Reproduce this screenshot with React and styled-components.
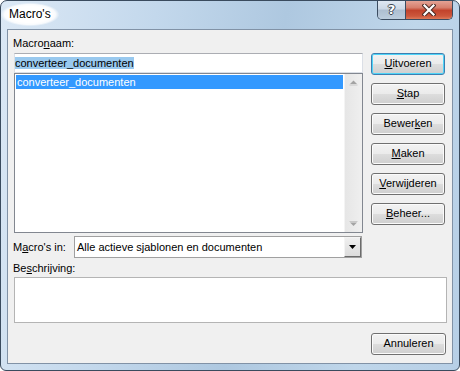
import React from "react";
import styled, { createGlobalStyle } from "styled-components";

const Global = createGlobalStyle`
  html, body { margin: 0; padding: 0; background: #ffffff; }
  body { font-family: "Liberation Sans", Arial, sans-serif; }
`;

const Window = styled.div`
  width: 460px;
  height: 371px;
  box-sizing: border-box;
  border: 1px solid #3a4b5e;
  border-radius: 7px 7px 6px 6px;
  background: linear-gradient(100deg, #dbe8f5 0%, #c3d8ec 30%, #aec8e0 55%, #bfd6ea 80%, #b7cfe6 100%);
  padding: 0 6px 6px;
  display: flex;
  flex-direction: column;
  overflow: hidden;
  font-family: "Liberation Sans", Arial, sans-serif;
  font-size: 11px;
  color: #000;
`;

const TitleBar = styled.div`
  height: 28px;
  display: flex;
  align-items: flex-start;
  flex: none;
`;

const Title = styled.div`
  margin: 2px 0 0 -6px;
  padding: 4px 8px 4px 8px;
  font-size: 12px;
  line-height: 15px;
  color: #000;
  background: radial-gradient(ellipse at center, rgba(255,255,255,1) 50%, rgba(255,255,255,0.85) 62%, rgba(255,255,255,0) 72%);
`;

const Caption = styled.div`
  margin-left: auto;
  margin-top: -1px;
  display: flex;
  height: 20px;
  box-sizing: border-box;
  border: 1px solid #3b4c60;
  border-top: none;
  border-radius: 0 0 5px 5px;
  overflow: hidden;
`;

const HelpBtn = styled.div`
  width: 27px;
  display: flex;
  align-items: center;
  justify-content: center;
  background: linear-gradient(#e2eaf3 0%, #cdd9e6 45%, #aebfd1 55%, #bccddd 100%);
  color: #fff;
  font-family: "DejaVu Sans", sans-serif;
  font-weight: bold;
  font-size: 13px;
  line-height: 13px;
  text-shadow: 1px 0 0 #3d4550, -1px 0 0 #3d4550, 0 1px 0 #3d4550, 0 -1px 0 #3d4550;
`;

const CloseBtn = styled.div`
  width: 46px;
  border-left: 1px solid #3b4c60;
  display: flex;
  align-items: center;
  justify-content: center;
  background: linear-gradient(#e6a89b 0%, #d67f6d 40%, #c2432c 55%, #cd573c 85%, #de7a5a 100%);
`;

const Client = styled.div`
  flex: 1;
  box-sizing: border-box;
  border: 1px solid #8192a6;
  background: #f0f0f0;
  padding: 0 5px 8px 6px;
  display: flex;
  flex-direction: column;
`;

const Top = styled.div`
  display: flex;
  gap: 8px;
  align-items: flex-start;
`;

const LeftCol = styled.div`
  width: 349px;
  display: flex;
  flex-direction: column;
`;

const Label = styled.div`
  margin-left: -1px;
  line-height: 13px;
  padding-top: ${(p) => p.$pt || 0}px;
  margin-top: ${(p) => p.$mt || 0}px;
  margin-bottom: ${(p) => p.$mb || 0}px;
  width: ${(p) => (p.$w ? p.$w + "px" : "auto")};
  flex: none;
  white-space: nowrap;
`;

const Key = styled.u`
  text-decoration: underline;
  text-underline-offset: 1px;
`;

const TextBox = styled.div`
  height: 20px;
  box-sizing: border-box;
  border: 1px solid #dbdfe6;
  border-top-color: #abadb3;
  background: #fff;
`;

const Selected = styled.span`
  display: inline-block;
  margin-top: 3px;
  line-height: 12px;
  height: 12px;
  background: #99c9ef;
  color: #000;
`;

const ListBox = styled.div`
  height: 160px;
  box-sizing: border-box;
  border: 1px solid #828790;
  background: #fff;
  display: flex;
`;

const Items = styled.div`
  flex: 1;
  padding: 1px;
`;

const Item = styled.div`
  height: 14px;
  line-height: 14px;
  padding-left: 1px;
  background: ${(p) => (p.$selected ? "#3399ff" : "transparent")};
  color: ${(p) => (p.$selected ? "#fff" : "#000")};
`;

const ScrollBar = styled.div`
  width: 17px;
  background: linear-gradient(to right, #e6e6e6, #efefef);
  border-left: 1px solid #f4f4f4;
  display: flex;
  flex-direction: column;
  justify-content: space-between;
`;

const ArrowBox = styled.div`
  height: 17px;
  display: flex;
  align-items: center;
  justify-content: center;
`;

const ButtonCol = styled.div`
  padding-top: 23px;
  display: flex;
  flex-direction: column;
  gap: 8px;
`;

const Button = styled.div`
  width: ${(p) => p.$w || 74}px;
  height: 22px;
  box-sizing: border-box;
  border: 1px solid ${(p) => (p.$default ? "#3c7fb1" : "#707070")};
  border-radius: 3px;
  background: linear-gradient(#f2f2f2 0%, #ebebeb 49%, #dddddd 51%, #cfcfcf 100%);
  box-shadow: inset 0 0 0 1px ${(p) => (p.$default ? "#4fd4f8" : "#fbfbfb")};
  display: flex;
  align-items: center;
  justify-content: center;
  line-height: 13px;
  padding-bottom: 1px;
  margin-right: ${(p) => p.$mr || 0}px;
`;

const Row = styled.div`
  margin-top: 3px;
  display: flex;
  align-items: center;
`;

const Select = styled.div`
  width: 288px;
  height: 22px;
  box-sizing: border-box;
  border: 1px solid #a0a0a0;
  background: #fff;
  display: flex;
  align-items: center;
`;

const SelectText = styled.div`
  flex: 1;
  padding-left: 2px;
  line-height: 13px;
`;

const DropBtn = styled.div`
  width: 17px;
  align-self: stretch;
  box-sizing: border-box;
  border: 1px solid;
  border-color: #f4f4f4 #6b6b6b #6b6b6b #f4f4f4;
  background: linear-gradient(#efefef, #dcdcdc);
  display: flex;
  align-items: center;
  justify-content: center;
`;

const DescBox = styled.div`
  height: 46px;
  box-sizing: border-box;
  border: 1px solid #b4b4b4;
  background: #fff;
`;

const Footer = styled.div`
  margin-top: 10px;
  display: flex;
  justify-content: flex-end;
`;

function Arrow({ up }) {
  return (
    <svg width="9" height="6" viewBox="0 0 9 6">
      {up ? (
        <>
          <path d="M4.5 0.5 L8 4 L1 4 Z" fill="#a3a3a3" />
          <rect x="0.5" y="4.5" width="8" height="1" fill="#c8c8c8" />
        </>
      ) : (
        <>
          <rect x="0.5" y="0" width="8" height="1" fill="#c8c8c8" />
          <path d="M1 1.5 L8 1.5 L4.5 5 Z" fill="#a3a3a3" />
        </>
      )}
    </svg>
  );
}

export default function App() {
  return (
    <>
      <Global />
      <Window>
        <TitleBar>
          <Title>Macro's</Title>
          <Caption>
            <HelpBtn>?</HelpBtn>
            <CloseBtn>
              <svg width="14" height="12" viewBox="0 0 14 12">
                <path d="M2.5 1.5 L11.5 10.5 M11.5 1.5 L2.5 10.5" stroke="#4a2a24" strokeWidth="4.2" strokeLinecap="square" fill="none" />
                <path d="M2.5 1.5 L11.5 10.5 M11.5 1.5 L2.5 10.5" stroke="#ffffff" strokeWidth="2.2" strokeLinecap="square" fill="none" />
              </svg>
            </CloseBtn>
          </Caption>
        </TitleBar>
        <Client>
          <Top>
            <LeftCol>
              <Label $pt={7} $mb={3}>
                Macro<Key>n</Key>aam:
              </Label>
              <TextBox>
                <Selected>converteer_documenten</Selected>
              </TextBox>
              <ListBox>
                <Items>
                  <Item $selected>converteer_documenten</Item>
                </Items>
                <ScrollBar>
                  <ArrowBox>
                    <Arrow up />
                  </ArrowBox>
                  <ArrowBox>
                    <Arrow />
                  </ArrowBox>
                </ScrollBar>
              </ListBox>
            </LeftCol>
            <ButtonCol>
              <Button $default>
                <span><Key>U</Key>itvoeren</span>
              </Button>
              <Button>
                <span><Key>S</Key>tap</span>
              </Button>
              <Button>
                <span>Bewer<Key>k</Key>en</span>
              </Button>
              <Button>
                <span><Key>M</Key>aken</span>
              </Button>
              <Button>
                <span><Key>V</Key>erwijderen</span>
              </Button>
              <Button>
                <span><Key>B</Key>eheer...</span>
              </Button>
            </ButtonCol>
          </Top>
          <Row>
            <Label $w={61}>
              M<Key>a</Key>cro's in:
            </Label>
            <Select>
              <SelectText>Alle actieve sjablonen en documenten</SelectText>
              <DropBtn>
                <svg width="7" height="4" viewBox="0 0 7 4">
                  <path d="M0 0 L7 0 L3.5 4 Z" fill="#000" />
                </svg>
              </DropBtn>
            </Select>
          </Row>
          <Label $mt={4} $mb={2}>
            Be<Key>s</Key>chrijving:
          </Label>
          <DescBox />
          <Footer>
            <Button $w={75} $mr={1}>Annuleren</Button>
          </Footer>
        </Client>
      </Window>
    </>
  );
}
